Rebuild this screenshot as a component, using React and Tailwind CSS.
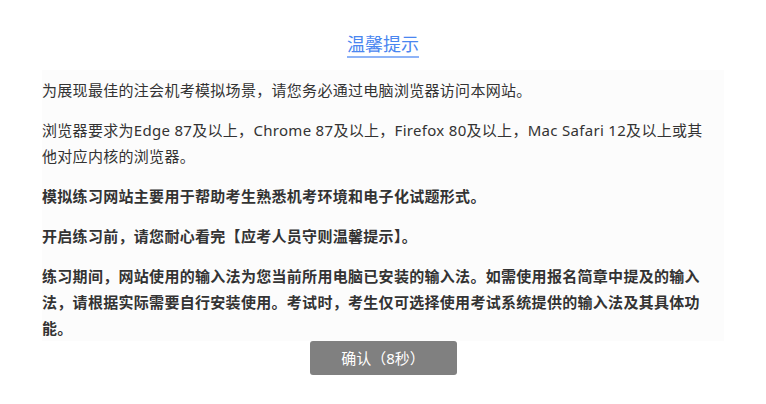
export default function App() {
  const paras = [
    { text: "为展现最佳的注会机考模拟场景，请您务必通过电脑浏览器访问本网站。", bold: false },
    {
      text: "浏览器要求为Edge 87及以上，Chrome 87及以上，Firefox 80及以上，Mac Safari 12及以上或其他对应内核的浏览器。",
      bold: false,
    },
    { text: "模拟练习网站主要用于帮助考生熟悉机考环境和电子化试题形式。", bold: true },
    { text: "开启练习前，请您耐心看完【应考人员守则温馨提示】。", bold: true },
    {
      text: "练习期间，网站使用的输入法为您当前所用电脑已安装的输入法。如需使用报名简章中提及的输入法，请根据实际需要自行安装使用。考试时，考生仅可选择使用考试系统提供的输入法及其具体功能。",
      bold: true,
    },
  ];

  return (
    <div
      className="w-[766px] h-[404px] bg-white overflow-hidden"
      style={{ fontFamily: '"Noto Sans", "Noto Sans CJK SC", sans-serif' }}
    >
      {/* Title */}
      <div className="flex justify-center pt-8">
        <h2 className="text-[18px] leading-6 text-[#4a86f0] border-b-2 border-[#8fb4f7]">
          温馨提示
        </h2>
      </div>

      {/* Content */}
      <div className="ml-[42px] w-[682px] mt-3 bg-[#fcfcfc] pt-[7px] pr-[10px] flex flex-col gap-[14px]">
        {paras.map((p, i) => (
          <p
            key={i}
            className={`text-[15px] tracking-[0.3px] leading-[26px] text-[#333333] ${p.bold ? "font-bold" : ""}`}
          >
            {p.text}
          </p>
        ))}
      </div>

      {/* Button */}
      <div className="flex justify-center">
        <button className="w-[147px] h-[34px] bg-[#808080] rounded-[3px] text-white text-[15px]">
          确认（8秒）
        </button>
      </div>
    </div>
  );
}
